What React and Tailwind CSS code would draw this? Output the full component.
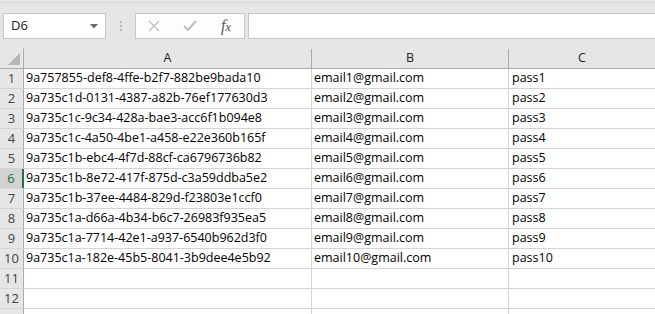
import React from 'react';

const rows = [
  ['9a757855-def8-4ffe-b2f7-882be9bada10', 'email1@gmail.com', 'pass1'],
  ['9a735c1d-0131-4387-a82b-76ef177630d3', 'email2@gmail.com', 'pass2'],
  ['9a735c1c-9c34-428a-bae3-acc6f1b094e8', 'email3@gmail.com', 'pass3'],
  ['9a735c1c-4a50-4be1-a458-e22e360b165f', 'email4@gmail.com', 'pass4'],
  ['9a735c1b-ebc4-4f7d-88cf-ca6796736b82', 'email5@gmail.com', 'pass5'],
  ['9a735c1b-8e72-417f-875d-c3a59ddba5e2', 'email6@gmail.com', 'pass6'],
  ['9a735c1b-37ee-4484-829d-f23803e1ccf0', 'email7@gmail.com', 'pass7'],
  ['9a735c1a-d66a-4b34-b6c7-26983f935ea5', 'email8@gmail.com', 'pass8'],
  ['9a735c1a-7714-42e1-a937-6540b962d3f0', 'email9@gmail.com', 'pass9'],
  ['9a735c1a-182e-45b5-8041-3b9dee4e5b92', 'email10@gmail.com', 'pass10'],
  ['', '', ''],
  ['', '', ''],
  ['', '', ''],
];

const FormulaBar = () => (
  <div className="h-[48px] bg-[#e6e6e6] pt-[2px]">
    <div className="border-t border-[#d5d5d5] pt-[10px] flex items-start">
      <div className="ml-[3px] w-[103px] h-[26px] bg-white border border-[#c6c6c6] flex items-center justify-between pl-[7px] pr-[7px]">
        <span className="text-[13px] text-[#222]">D6</span>
        <svg width="8" height="5" viewBox="0 0 8 5">
          <path d="M0 0 L8 0 L4 4.5 Z" fill="#6b6b6b" />
        </svg>
      </div>
      <div className="w-[29px] h-[26px] flex flex-col items-center justify-center gap-[2px]">
        <div className="w-[2px] h-[2px] bg-[#b5b5b5]" />
        <div className="w-[2px] h-[2px] bg-[#b5b5b5]" />
        <div className="w-[2px] h-[2px] bg-[#b5b5b5]" />
      </div>
      <div className="w-[110px] h-[26px] bg-[#fdfdfd] border border-[#c6c6c6] flex items-center">
        <div className="w-[36px] flex justify-center">
          <svg width="12" height="12" viewBox="0 0 12 12">
            <path d="M1 1 L11 11 M11 1 L1 11" stroke="#bcbcbc" strokeWidth="1.3" />
          </svg>
        </div>
        <div className="w-[36px] flex justify-center">
          <svg width="14" height="12" viewBox="0 0 14 12">
            <path d="M1 6 L5 10 L13 1" stroke="#bcbcbc" strokeWidth="2" fill="none" />
          </svg>
        </div>
        <div className="w-[36px] flex justify-center">
          <span className="text-[16px] italic text-[#555] leading-none" style={{ fontFamily: '"Liberation Serif", serif' }}>
            f<span className="text-[13px]">x</span>
          </span>
        </div>
      </div>
      <div className="ml-[3px] flex-1 h-[26px] bg-white border border-[#c6c6c6] border-r-0" />
    </div>
  </div>
);

export default function App() {
  return (
    <div className="w-[655px] h-[314px] overflow-hidden bg-white" style={{ fontFamily: '"Open Sans", sans-serif' }}>
      <FormulaBar />
      <div className="flex h-[21px] bg-[#e6e6e6] border-b border-[#ababab] text-[12.5px] text-[#222]">
        <div className="w-[24px] border-r border-[#ababab] flex items-end justify-end pr-[3px] pb-[3px]">
          <svg width="12" height="12" viewBox="0 0 12 12">
            <path d="M12 0 L12 12 L0 12 Z" fill="#b5b5b5" />
          </svg>
        </div>
        <div className="w-[288px] border-r border-[#ababab] flex items-center justify-center mt-[1px]">A</div>
        <div className="w-[197px] border-r border-[#ababab] flex items-center justify-center mt-[1px]">B</div>
        <div className="flex-1 flex items-center justify-center">C</div>
      </div>
      {rows.map((r, i) => {
        const sel = i === 5;
        return (
          <div key={i} className="flex h-[20px] border-b border-[#d4d4d4] text-[12.5px] text-black">
            <div
              className={
                sel
                  ? 'w-[24px] bg-[#d2d2d2] border-r-2 border-[#217346] text-[#217346] flex items-center justify-center text-[13px]'
                  : 'w-[24px] bg-[#e6e6e6] border-r border-[#ababab] text-[#444] flex items-center justify-center text-[13px]'
              }
            >
              {i < 12 ? i + 1 : ''}
            </div>
            <div className="w-[288px] border-r border-[#d4d4d4] flex items-center pl-[2px] whitespace-nowrap overflow-hidden">{r[0]}</div>
            <div className="w-[197px] border-r border-[#d4d4d4] flex items-center pl-[2px] whitespace-nowrap">{r[1]}</div>
            <div className="flex-1 flex items-center pl-[3px]">{r[2]}</div>
          </div>
        );
      })}
    </div>
  );
}
